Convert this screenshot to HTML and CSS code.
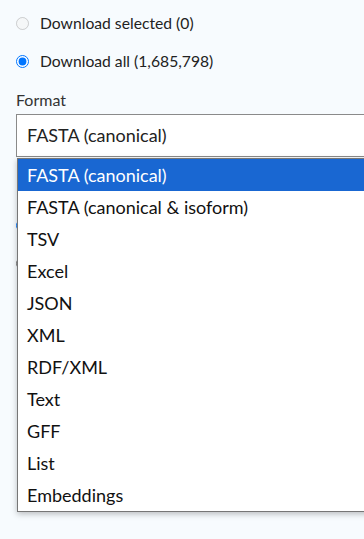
FILE: index.html
```html
<!DOCTYPE html>
<html>
<head>
  <title>Download</title>
  <link rel="stylesheet" href="styles.css">
</head>
<body>
  <form class="download-form">
    <div class="options">
      <label class="radio-row"><input type="radio" name="scope" disabled> Download selected (0)</label>
      <label class="radio-row"><input type="radio" name="scope" checked> Download all (1,685,798)</label>
    </div>

    <div class="field">
      <span class="field-label">Format</span>
      <div class="select-wrap">
        <div class="select">FASTA (canonical)</div>
        <!-- open dropdown list -->
        <ul class="dropdown">
          <li class="active">FASTA (canonical)</li>
          <li>FASTA (canonical &amp; isoform)</li>
          <li>TSV</li>
          <li>Excel</li>
          <li>JSON</li>
          <li>XML</li>
          <li>RDF/XML</li>
          <li>Text</li>
          <li>GFF</li>
          <li>List</li>
          <li>Embeddings</li>
        </ul>
      </div>
    </div>

    <!-- compression options, covered by the open list -->
    <div class="options covered">
      <label class="radio-row"><input type="radio" name="gzip" aria-label="Compressed" checked></label>
      <label class="radio-row"><input type="radio" name="gzip" aria-label="Uncompressed"></label>
    </div>
  </form>
</body>
</html>
```

FILE: styles.css
```css
html {
  overflow: hidden;
}

body {
  font-family: Lato, "Open Sans", sans-serif;
  margin: 0;
  padding: 0;
  min-height: 539px;
  background-color: #f7fbfe;
  color: #222;
}

.download-form {
  padding: 12px 0 0 16px;
}

.options {
  display: flex;
  flex-direction: column;
  gap: 16px;
}

.options.covered {
  margin-top: 57px;
}

.radio-row {
  display: flex;
  align-items: center;
  gap: 11px;
  height: 22px;
  font-size: 15.7px;
}

.radio-row input {
  margin: 0;
  width: 13px;
  height: 13px;
}

.field {
  display: flex;
  flex-direction: column;
  gap: 4px;
  margin-top: 18px;
}

.field-label {
  font-size: 16px;
  line-height: 20px;
  color: #333;
}

.select-wrap {
  position: relative;
}

.select {
  width: 420px;
  height: 41px;
  box-sizing: content-box;
  border: 1px solid #8a8a8a;
  background-color: white;
  font-size: 18px;
  line-height: 41px;
  padding-left: 10px;
  color: #222;
}

.dropdown {
  position: absolute;
  top: 44px;
  left: 1px;
  width: 420px;
  margin: 0;
  padding: 0;
  list-style: none;
  background-color: white;
  border: 1px solid #767676;
  box-shadow: 0 2px 6px rgba(0,0,0,0.25);
  z-index: 2;
}

.dropdown li {
  height: 32px;
  line-height: 32px;
  padding-left: 9px;
  font-size: 18px;
  color: #111;
}

.dropdown li.active {
  background-color: #1967d2;
  color: white;
}
```
